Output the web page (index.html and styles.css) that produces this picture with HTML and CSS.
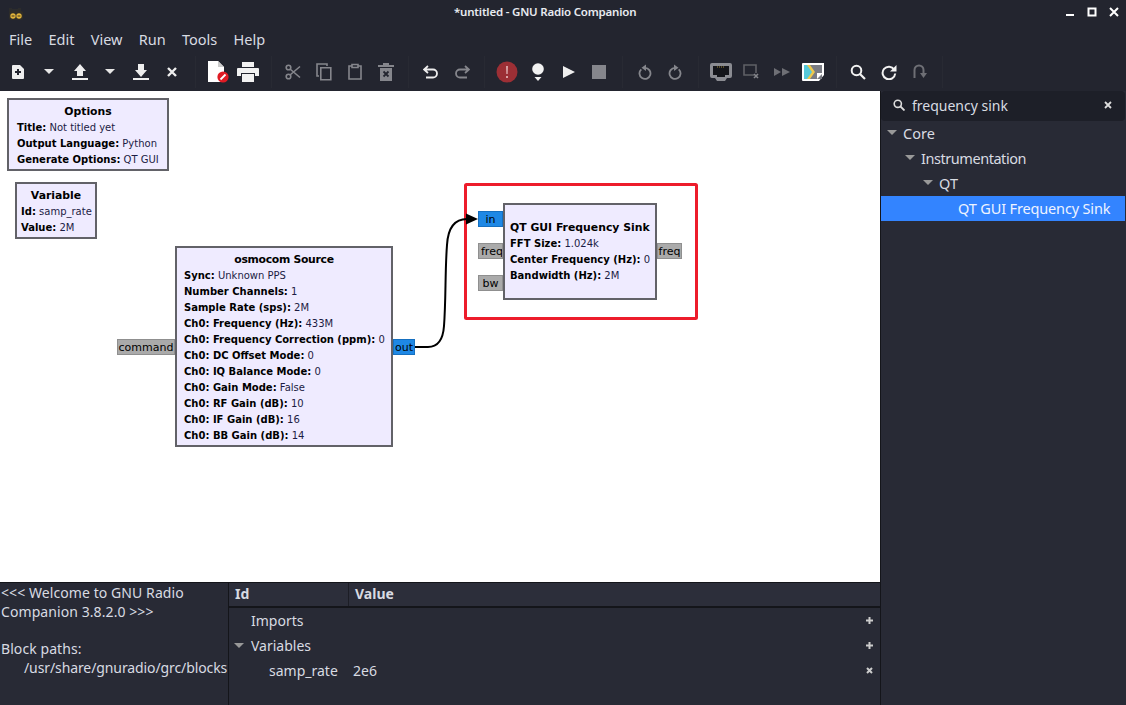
FILE: index.html
```html
<!DOCTYPE html>
<html lang="en">
<head>
<meta charset="utf-8">
<title>*untitled - GNU Radio Companion</title>
<link rel="stylesheet" href="styles.css">
</head>
<body>
<div class="window">
  <header class="titlebar">
    <svg class="applogo" width="16" height="14" viewBox="0 0 16 14"><path d="M1 5V1h3v1h6V1h3v4z" fill="#2c2c2c"/><rect x="1" y="4" width="14" height="9" rx="2" fill="#2f2d28"/><circle cx="5" cy="9" r="2.7" fill="#e2b53a"/><circle cx="11" cy="9" r="2.7" fill="#e2b53a"/><rect x="3.6" y="8.5" width="2.8" height="1" fill="#3a3020"/><rect x="9.6" y="8.5" width="2.8" height="1" fill="#3a3020"/></svg>
    <div class="wintitle">*untitled - GNU Radio Companion</div>
    <div class="winbtns">
      <svg width="10" height="10" viewBox="0 0 10 10"><rect x="1" y="7" width="8" height="2" fill="#fff"/></svg>
      <svg width="10" height="10" viewBox="0 0 10 10"><path d="M1.5 1.5h7v7h-7z" fill="none" stroke="#fff" stroke-width="2"/></svg>
      <svg width="10" height="10" viewBox="0 0 10 10"><path d="M1 1l8 8M9 1l-8 8" stroke="#fff" stroke-width="2"/></svg>
    </div>
  </header>
  <nav class="menubar">
    <span>File</span><span>Edit</span><span>View</span><span>Run</span><span>Tools</span><span>Help</span>
  </nav>
  <div class="toolbar">
    <div class="tb"><svg width="16" height="16" viewBox="0 0 16 16"><path d="M2 2a1 1 0 0 1 1-1h7l4 4v9a1 1 0 0 1-1 1H3a1 1 0 0 1-1-1z" fill="#eee"/><path d="M8 5v6M5 8h6" stroke="#23252f" stroke-width="2"/></svg></div>
    <div class="tb"><svg width="12" height="6" viewBox="0 0 12 6"><path d="M1 0h10L6 5z" fill="#e6e6e6"/></svg></div>
    <div class="tb"><svg width="18" height="18" viewBox="0 0 18 18"><path d="M9 1l6 7h-3v5H6V8H3z" fill="#eee"/><rect x="1" y="15" width="16" height="2" fill="#eee"/></svg></div>
    <div class="tb"><svg width="12" height="6" viewBox="0 0 12 6"><path d="M1 0h10L6 5z" fill="#e6e6e6"/></svg></div>
    <div class="tb"><svg width="18" height="18" viewBox="0 0 18 18"><path d="M6 1h6v6h3l-6 7-6-7h3z" fill="#eee"/><rect x="1" y="15" width="16" height="2" fill="#eee"/></svg></div>
    <div class="tb"><svg width="12" height="12" viewBox="0 0 12 12"><path d="M2 2l8 8M10 2l-8 8" stroke="#eee" stroke-width="2.4"/></svg></div>
    <div class="sep"></div>
    <div class="tb"><svg width="24" height="23" viewBox="-3 0 24 23"><path d="M0 1h10l6 6v15H0z" fill="#fff"/><path d="M10 1l6 6h-6z" fill="#ccc"/><circle cx="15" cy="17" r="5.600" fill="#e01b24"/><path d="M12.500 19.500l5-5" stroke="#fff" stroke-width="1.800"/></svg></div>
    <div class="tb"><svg width="22" height="20" viewBox="0 0 22 20"><path d="M5 0h12v5H5zM1 6h20a1 1 0 0 1 1 1v7h-4v-3H4v3H0V7a1 1 0 0 1 1-1z" fill="#f2f2f2"/><path d="M5 12h12v8H5z" fill="#f2f2f2"/></svg></div>
    <div class="sep"></div>
    <div class="tb"><svg width="16" height="16" viewBox="0 0 16 16"><g fill="none" stroke="#85868c" stroke-width="1.600"><circle cx="3.500" cy="3.500" r="2.300"/><circle cx="3.500" cy="12.500" r="2.300"/><path d="M5 5l10 8.500M5 11l10-8.500"/></g></svg></div>
    <div class="tb"><svg width="16" height="18" viewBox="0 0 16 18"><g fill="none" stroke="#85868c" stroke-width="1.600"><path d="M3 13H1V1h10v2"/><path d="M4.800 4.800h10v12h-10z"/></g></svg></div>
    <div class="tb"><svg width="14" height="17" viewBox="0 0 14 17"><path d="M4 3H1v13h12V3h-3M4 1.500h6v3H4z" fill="none" stroke="#85868c" stroke-width="1.600"/></svg></div>
    <div class="tb"><svg width="16" height="18" viewBox="0 0 16 18"><path d="M0 2h5V0h6v2h5v2H0zM2 5h12v13H2z" fill="#85868c"/><path d="M5.500 8.500l5 5M10.500 8.500l-5 5" stroke="#23252f" stroke-width="1.800"/></svg></div>
    <div class="sep"></div>
    <div class="tb"><svg width="16" height="14" viewBox="0 0 16 14"><path d="M5 1L1 4.500 5 8M2 4.500h8a4 4 0 0 1 0 8H3" fill="none" stroke="#eee" stroke-width="1.800"/></svg></div>
    <div class="tb"><svg width="16" height="14" viewBox="0 0 16 14"><path d="M11 1l4 3.500L11 8M14 4.500H6a4 4 0 0 0 0 8h7" fill="none" stroke="#85868c" stroke-width="1.800"/></svg></div>
    <div class="sep"></div>
    <div class="tb"><svg width="22" height="22" viewBox="0 0 22 22"><circle cx="11" cy="11" r="10.500" fill="#9c2f35"/><path d="M10 5h2l-.3 8h-1.400zM10 15h2v2h-2z" fill="#d9a3a5"/></svg></div>
    <div class="tb"><svg width="14" height="20" viewBox="0 0 14 20"><circle cx="7" cy="7" r="5.800" fill="#f2f2f2"/><path d="M3.500 15h7L7 19z" fill="#f2f2f2"/></svg></div>
    <div class="tb"><svg width="14" height="14" viewBox="0 0 14 14"><path d="M1 1l12 6-12 6z" fill="#eee"/></svg></div>
    <div class="tb"><svg width="14" height="14" viewBox="0 0 14 14"><rect width="14" height="14" fill="#85868c"/></svg></div>
    <div class="sep"></div>
    <div class="tb"><svg width="14" height="16" viewBox="0 0 14 16"><g fill="none" stroke="#85868c" stroke-width="1.800"><path d="M3.300 5.300a5.500 5.500 0 1 0 3.700-1.400"/></g><path d="M8 .5v6.500L3.500 3.800z" fill="#85868c"/></svg></div>
    <div class="tb"><svg width="14" height="16" viewBox="0 0 14 16"><g fill="none" stroke="#85868c" stroke-width="1.800"><path d="M10.700 5.300A5.500 5.500 0 1 1 7 3.900"/></g><path d="M6 .5v6.500l4.500-3.200z" fill="#85868c"/></svg></div>
    <div class="sep"></div>
    <div class="tb"><svg width="22" height="18" viewBox="0 0 22 18"><path d="M2 0h18a2 2 0 0 1 2 2v11a2 2 0 0 1-2 2h-3l-2 3H7l-2-3H2a2 2 0 0 1-2-2V2a2 2 0 0 1 2-2z" fill="#8b8c92"/><path d="M3 3h16v9h-4v2H7v-2H3z" fill="#14151a"/><path d="M7 4h8" stroke="#a08a3c" stroke-dasharray="1 1"/></svg></div>
    <div class="tb"><svg width="16" height="15" viewBox="0 0 16 15"><path d="M11 11H1V1h12v8" fill="none" stroke="#5f6066" stroke-width="1.600"/><path d="M11 10l4 4M15 10l-4 4" stroke="#85868c" stroke-width="1.600"/></svg></div>
    <div class="tb"><svg width="16" height="10" viewBox="0 0 16 10"><path d="M0 1l7 4-7 4zM8 1l8 4-8 4z" fill="#6e6f75"/></svg></div>
    <div class="tb"><svg width="22" height="18" viewBox="0 0 22 18"><path d="M1 0h21v12l-5 6H1a1 1 0 0 1-1-1V1a1 1 0 0 1 1-1z" fill="#fff"/><rect x="2" y="2" width="18" height="14" fill="#7a7c84"/><path d="M2 2h5l5 7-5 7H2z" fill="#56c8d8"/><path d="M5 2h3l5 7-5 7H5l5-7z" fill="#efc94c"/><path d="M15 16l5-5v-1h-5z" fill="#fff"/></svg></div>
    <div class="sep"></div>
    <div class="tb"><svg width="16" height="16" viewBox="0 0 16 16"><circle cx="6.500" cy="6.500" r="4.800" fill="none" stroke="#f2f2f2" stroke-width="2"/><path d="M10 10l5 5" stroke="#f2f2f2" stroke-width="2.200"/></svg></div>
    <div class="tb"><svg width="16" height="16" viewBox="0 0 16 16"><path d="M13.200 5.500a6.300 6.300 0 1 0 1 4" fill="none" stroke="#f2f2f2" stroke-width="2"/><path d="M15.500 1v6.500H9z" fill="#f2f2f2"/></svg></div>
    <div class="tb"><svg width="14" height="16" viewBox="0 0 14 16"><path d="M1.500 14V6a4.500 4.500 0 0 1 9 0v4" fill="none" stroke="#6e6f75" stroke-width="2"/><path d="M7 9h7l-3.500 5z" fill="#6e6f75"/></svg></div>
    <div class="sep"></div>
  </div>
  <div class="workspace">
    <div class="mainarea">
      <main class="canvas">
        <svg class="overlay" width="880" height="491" viewBox="0 91 880 491">
          <rect x="465.500" y="184.500" width="231" height="134" rx="1" fill="none" stroke="#ed1c2b" stroke-width="3"/>
          <path d="M415 347H428C438 347 443 340 444 326C446 300 445 270 447 245C448 228 455 219 467 219" fill="none" stroke="#000" stroke-width="2"/>
          <path d="M466 213.500l12 5.500-12 5.500z" fill="#000"/>
        </svg>

        <section class="block options">
          <h3>Options</h3>
          <p><b>Title:</b> Not titled yet</p>
          <p><b>Output Language:</b> Python</p>
          <p><b>Generate Options:</b> QT GUI</p>
        </section>
        <section class="block variable">
          <h3>Variable</h3>
          <p><b>Id:</b> samp_rate</p>
          <p><b>Value:</b> 2M</p>
        </section>
        <section class="block osmo">
          <h3>osmocom Source</h3>
          <p><b>Sync:</b> Unknown PPS</p>
          <p><b>Number Channels:</b> 1</p>
          <p><b>Sample Rate (sps):</b> 2M</p>
          <p><b>Ch0: Frequency (Hz):</b> 433M</p>
          <p><b>Ch0: Frequency Correction (ppm):</b> 0</p>
          <p><b>Ch0: DC Offset Mode:</b> 0</p>
          <p><b>Ch0: IQ Balance Mode:</b> 0</p>
          <p><b>Ch0: Gain Mode:</b> False</p>
          <p><b>Ch0: RF Gain (dB):</b> 10</p>
          <p><b>Ch0: IF Gain (dB):</b> 16</p>
          <p><b>Ch0: BB Gain (dB):</b> 14</p>
        </section>
        <section class="block sink">
          <h3>QT GUI Frequency Sink</h3>
          <p><b>FFT Size:</b> 1.024k</p>
          <p><b>Center Frequency (Hz):</b> 0</p>
          <p><b>Bandwidth (Hz):</b> 2M</p>
        </section>
        <div class="port grey p-command">command</div>
        <div class="port blue p-out">out</div>
        <div class="port blue p-in">in</div>
        <div class="port grey p-freq">freq</div>
        <div class="port grey p-bw">bw</div>
        <div class="port grey p-freqout">freq</div>
      </main>
      <div class="bottom">
        <div class="console">
          <div>&lt;&lt;&lt; Welcome to GNU Radio Companion 3.8.2.0 &gt;&gt;&gt;</div>
          <div class="gap">Block paths:</div>
          <div class="path">/usr/share/gnuradio/grc/blocks</div>
        </div>
        <div class="vars">
          <div class="varhead"><div class="col-id">Id</div><div class="col-val">Value</div></div>
          <div class="varrow"><span class="vname n1">Imports</span><svg class="act" width="9" height="9" viewBox="0 0 9 9"><path d="M4.500 1v7M1 4.500h7" stroke="#ccc" stroke-width="2"/></svg></div>
          <div class="varrow"><svg class="arrow" width="10" height="6" viewBox="0 0 10 6"><path d="M0 0h10L5 5z" fill="#999"/></svg><span class="vname n2">Variables</span><svg class="act" width="9" height="9" viewBox="0 0 9 9"><path d="M4.500 1v7M1 4.500h7" stroke="#ccc" stroke-width="2"/></svg></div>
          <div class="varrow"><span class="vname n3">samp_rate</span><span class="vval">2e6</span><svg class="act" width="9" height="9" viewBox="0 0 9 9"><path d="M2 2l5 5M7 2l-5 5" stroke="#ccc" stroke-width="2"/></svg></div>
        </div>
      </div>
    </div>
    <aside class="sidebar">
      <div class="search">
        <svg width="12" height="12" viewBox="0 0 12 12"><circle cx="4.800" cy="4.800" r="3.600" fill="none" stroke="#ddd" stroke-width="1.600"/><path d="M7.500 7.500l4 4" stroke="#ddd" stroke-width="1.800"/></svg>
        <span class="query">frequency sink</span>
        <svg class="clear" width="8" height="8" viewBox="0 0 8 8"><path d="M1 1l6 6M7 1l-6 6" stroke="#ddd" stroke-width="1.800"/></svg>
      </div>
      <div class="treerow t0"><svg width="10" height="6" viewBox="0 0 10 6"><path d="M0 0h10L5 5z" fill="#999"/></svg><span>Core</span></div>
      <div class="treerow t1"><svg width="10" height="6" viewBox="0 0 10 6"><path d="M0 0h10L5 5z" fill="#999"/></svg><span class="tight">Instrumentation</span></div>
      <div class="treerow t2"><svg width="10" height="6" viewBox="0 0 10 6"><path d="M0 0h10L5 5z" fill="#999"/></svg><span>QT</span></div>
      <div class="treerow t3 selected"><span class="slight">QT GUI Frequency Sink</span></div>
    </aside>
  </div>
</div>
</body>
</html>
```
FILE: styles.css
```css
* { box-sizing: border-box; }
html, body { margin: 0; padding: 0; height: 100%; }
body {
  background: #282a35;
  font-family: "Noto Sans", sans-serif;
  color: #d8dbe2;
  overflow: hidden;
}
.window { width: 1126px; height: 705px; display: flex; flex-direction: column; }

.titlebar {
  height: 28px; flex: none; background: #23252f;
  display: flex; align-items: center; position: relative;
}
.applogo { margin-left: 8px; margin-top: 0; }
.wintitle {
  position: absolute; left: 454px; top: 3px;
  font-size: 11.500px; letter-spacing: -0.2px; font-weight: 600; line-height: 18px; color: #e8ebf0;
}
.winbtns { margin-left: auto; margin-right: 7px; display: flex; gap: 12px; margin-top: -4px; }

.menubar {
  height: 24px; flex: none; background: #23252f;
  display: flex; gap: 16.300px; padding: 0 0 2px 9px; align-items: center;
  font-size: 14.500px; color: #d8dbe2;
}

.toolbar {
  height: 39px; flex: none; background: #23252f;
  display: flex; align-items: center; padding-left: 2.500px;
}
.tb { width: 30.850px; height: 39px; display: flex; align-items: center; justify-content: center; flex: none; }
.sep { width: 14.300px; height: 32px; flex: none; position: relative; }
.sep::after { content: ""; position: absolute; left: 7px; top: 0; bottom: 0; width: 1px; background: #282a33; }

.workspace { flex: 1; display: flex; min-height: 0; }
.mainarea { width: 881px; flex: none; display: flex; flex-direction: column; border-right: 1px solid #14151a; }

.canvas { height: 491px; flex: none; background: #fff; position: relative; overflow: hidden; }
.overlay { position: absolute; left: 0; top: 0; }

.block {
  position: absolute; background: #efebff; border: 2px solid #626268;
  font-family: "DejaVu Sans", sans-serif; font-size: 10px; line-height: 16px;
  color: #1c1c44; white-space: nowrap; padding: 4px 0 0 8px;
}
.block h3 { margin: 0 0 0 -8px; font-size: 10.850px; font-weight: 700; text-align: center; color: #000; line-height: 16px; }
.block p { margin: 0; }
.block b { color: #000; }
.options { left: 7px; top: 7px; width: 162px; height: 73px; }
.variable { left: 15px; top: 91px; width: 82px; height: 57px; padding-left: 4px; }
.variable h3 { margin-left: -4px; }
.osmo { left: 175px; top: 155px; width: 218px; height: 201px; padding-left: 7px; }
.osmo h3 { margin-left: -7px; letter-spacing: -0.3px; }
.sink { left: 503px; top: 112px; width: 154px; height: 97px; padding: 15px 0 0 5px; }
.sink h3 { margin-left: 0; text-align: left; }

.port {
  position: absolute; height: 16px; border: 1px solid #8f8f8f;
  font-family: "DejaVu Sans", sans-serif; font-size: 11px; line-height: 15px; color: #000;
  white-space: nowrap; overflow: hidden; text-align: center;
}
.grey { background: #aaa; }
.blue { background: #1e88e5; border-color: #1670c0; }
.p-command { left: 117px; top: 248px; width: 58px; }
.p-out { left: 393px; top: 248px; width: 22px; }
.p-in { left: 478px; top: 120px; width: 25px; }
.p-freq { left: 478px; top: 152px; width: 25px; padding-left: 2px; text-align: left; }
.p-bw { left: 478px; top: 184px; width: 25px; }
.p-freqout { left: 657px; top: 152px; width: 25px; }

.bottom { flex: 1; display: flex; min-height: 0; border-top: 1px solid #14151a; background: #282a35; }
.console {
  width: 229px; flex: none; border-right: 1px solid #14151a;
  font-size: 14px; letter-spacing: 0.08px; line-height: 18.700px; padding: 1px 0 0 1px; color: #d8dbe2;
}
.gap { margin-top: 18.700px; }
.path { padding-left: 23px; white-space: nowrap; letter-spacing: -0.1px; }
.vars { flex: 1; min-width: 0; font-size: 14px; }
.varhead { height: 25px; display: flex; background: #2c2e3a; border-bottom: 2px solid #14151a; font-weight: 700; line-height: 22px; }
.col-id { width: 120px; padding-left: 6px; border-right: 1px solid #1c1d25; }
.col-val { padding-left: 6px; }
.varrow { height: 25px; display: flex; align-items: center; position: relative; }
.arrow { position: absolute; left: 5px; top: 10px; }
.vname { position: absolute; line-height: 25px; top: 0; }
.n1, .n2 { left: 22px; }
.n3 { left: 40px; }
.vval { position: absolute; left: 124px; line-height: 25px; top: 0; }
.act { position: absolute; right: 6px; top: 8px; }

.sidebar { flex: 1; min-width: 0; background: #282a35; }
.search {
  height: 30px; background: #1d1f28; border-radius: 4px; margin-right: 1px;
  display: flex; align-items: center; padding: 0 13px 2px 12px; gap: 7px; font-size: 14px;
}
.query { flex: 1; }
.treerow { height: 25px; display: flex; align-items: center; font-size: 14.500px; gap: 6px; padding-bottom: 2px; white-space: nowrap; }
.tight { letter-spacing: -0.45px; }
.slight { letter-spacing: -0.15px; }
.t0 { padding-left: 6px; }
.t1 { padding-left: 24px; }
.t2 { padding-left: 42px; }
.t3 { padding-left: 77px; margin-right: 1px; }
.selected { background: #3384ff; color: #eef3ff; }
```
